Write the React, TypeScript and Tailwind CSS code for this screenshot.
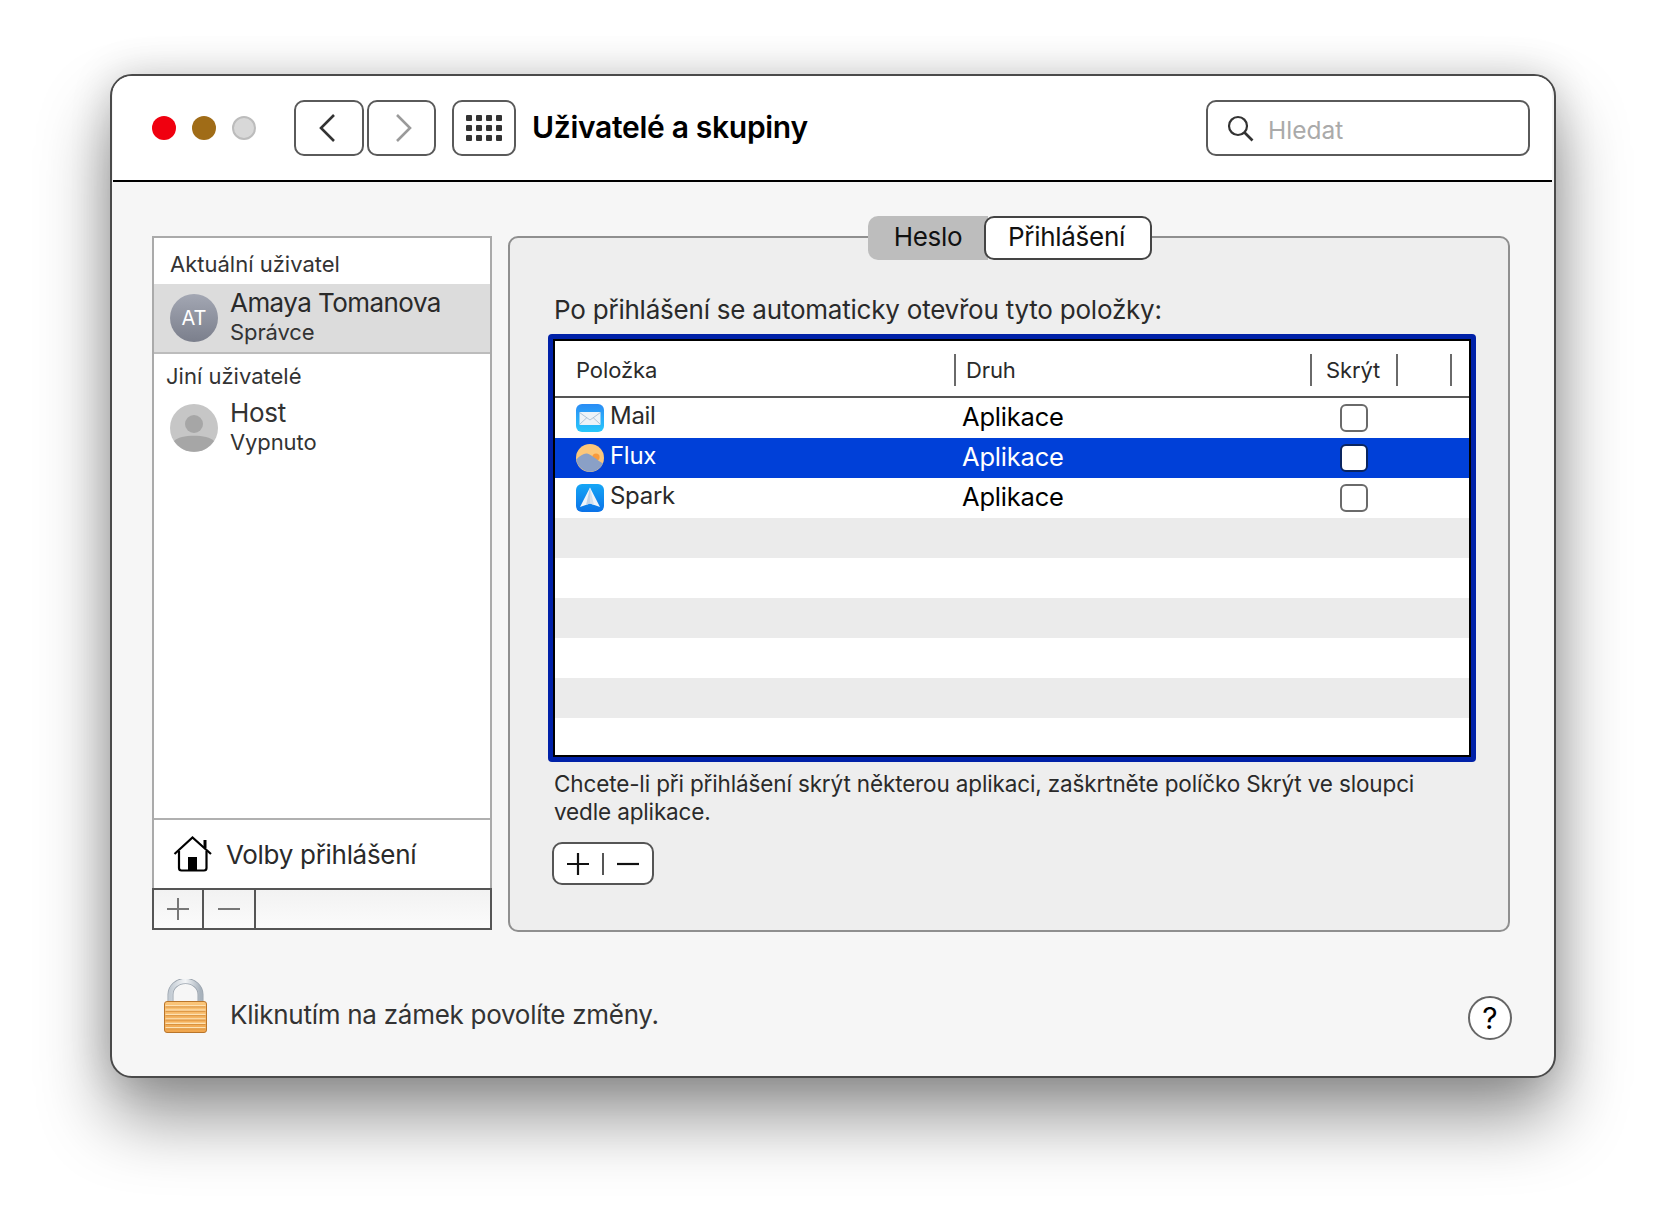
import React from "react";

const font = "font-['Inter','Liberation_Sans',sans-serif]";

function Chevron({ dir, color }: { dir: "l" | "r"; color: string }) {
  return (
    <svg width="20" height="30" viewBox="0 0 20 30" fill="none">
      <path d={dir === "l" ? "M16 2 L3 15 L16 28" : "M4 2 L17 15 L4 28"} stroke={color} strokeWidth="2.6" />
    </svg>
  );
}

function MailIcon() {
  return (
    <svg width="28" height="28" viewBox="0 0 28 28">
      <defs>
        <linearGradient id="m" x1="0" y1="0" x2="0" y2="1">
          <stop offset="0" stopColor="#2a8cf5" />
          <stop offset="1" stopColor="#28c8fb" />
        </linearGradient>
      </defs>
      <rect width="28" height="28" rx="6" fill="url(#m)" />
      <rect x="3.5" y="8" width="21" height="13" rx="1" fill="#eef3f8" />
      <path d="M3.5 8.5 L14 16 L24.5 8.5 M3.5 20.5 L11 13.5 M24.5 20.5 L17 13.5" stroke="#a9bed2" strokeWidth="0.9" fill="none" />
    </svg>
  );
}

function FluxIcon() {
  return (
    <svg width="28" height="28" viewBox="0 0 28 28">
      <circle cx="14" cy="14" r="14" fill="#fcc77a" />
      <circle cx="20" cy="13" r="3.6" fill="#f89a3c" />
      <path d="M0.3 15.5 C4 11.5 8 9 11 9.5 C15 10 22 17 27 19.5 A14 14 0 0 1 0.3 15.5 Z" fill="#8aa0c6" />
    </svg>
  );
}

function SparkIcon() {
  return (
    <svg width="28" height="28" viewBox="0 0 28 28">
      <defs>
        <linearGradient id="s" x1="0" y1="0" x2="0" y2="1">
          <stop offset="0" stopColor="#15a6f6" />
          <stop offset="1" stopColor="#0b72e8" />
        </linearGradient>
      </defs>
      <rect width="28" height="28" rx="6" fill="url(#s)" />
      <path d="M14 3.6 L24 23 L14 19.5 L4 23 Z" fill="#f0f4fa" />
      <path d="M14 3.6 L14 19.5 L10 21 Z" fill="#c4d3e6" />
      <path d="M14 3.6 L14 19.5 L18 21 Z" fill="#d4e0ee" />
    </svg>
  );
}

function House() {
  return (
    <svg width="40" height="36" viewBox="0 0 40 36" fill="none">
      <path d="M1.5 18 L19.5 1.5 L38 18" stroke="#000" strokeWidth="2.2" />
      <path d="M32 4 V12" stroke="#000" strokeWidth="3" />
      <path d="M6 15 V32 Q6 34.5 8.5 34.5 H31 Q33.5 34.5 33.5 32 V15" stroke="#000" strokeWidth="2.2" />
      <rect x="15" y="21" width="9" height="13" fill="#000" />
    </svg>
  );
}

function Lock() {
  const stripes = [0, 1, 2, 3, 4, 5];
  return (
    <svg width="43" height="54" viewBox="0 0 43 54">
      <defs>
        <linearGradient id="lk" x1="0" y1="0" x2="0" y2="1">
          <stop offset="0" stopColor="#fbc67a" />
          <stop offset="1" stopColor="#f0a54c" />
        </linearGradient>
        <linearGradient id="sh" x1="0" y1="0" x2="1" y2="0">
          <stop offset="0" stopColor="#c4ccd4" />
          <stop offset="0.5" stopColor="#f3f5f7" />
          <stop offset="1" stopColor="#a8b2bc" />
        </linearGradient>
      </defs>
      <path d="M6.5 23 V15.5 A15 13.5 0 0 1 36.5 15.5 V23" stroke="#9aa3ad" strokeWidth="6" fill="none" />
      <path d="M6.5 23 V15.5 A15 13.5 0 0 1 36.5 15.5 V23" stroke="url(#sh)" strokeWidth="4.4" fill="none" />
      <rect x="0.5" y="22.5" width="42" height="31" rx="2.5" fill="url(#lk)" stroke="#b9752a" />
      {stripes.map((i) => (
        <g key={i}>
          <rect x="1.5" y={26 + i * 4.4} width="40" height="1.4" fill="#fde2b4" />
          <rect x="1.5" y={27.4 + i * 4.4} width="40" height="1" fill="#d9923f" />
        </g>
      ))}
    </svg>
  );
}

function Checkbox({ selected }: { selected?: boolean }) {
  return (
    <div
      className={
        "w-[28px] h-[28px] rounded-[6px] border-2 bg-white " +
        (selected ? "border-[#0a2560]" : "border-[#6a6a6a]")
      }
    />
  );
}

function Row({ icon, name, selected }: { icon: React.ReactNode; name: string; selected?: boolean }) {
  return (
    <div className={"flex items-center h-[40px] " + (selected ? "bg-[#0040d8] text-white" : "bg-white")}>
      <div className="w-[407px] pl-[21px] flex items-center gap-[6px]">
        {icon}
        <span className={"text-[24px] tracking-[-0.3px] -mt-[4px] " + (selected ? "text-white" : "text-[#2a2a2a]")}>{name}</span>
      </div>
      <div className={"w-[378px] -mt-[2px] text-[25.5px] tracking-[-0.2px] " + (selected ? "text-white" : "text-black")}>Aplikace</div>
      <Checkbox selected={selected} />
    </div>
  );
}

function Sep() {
  return <div className="w-[2px] h-[32px] mt-[2px] bg-[#6a6a6a]" />;
}

export default function App() {
  return (
    <div className={"w-[1666px] h-[1224px] bg-white pl-[110px] pt-[74px] overflow-hidden " + font}>
      <div className="w-[1446px] h-[1004px] rounded-[22px] border-2 border-[#4a4a4a] bg-[#f6f6f6] overflow-hidden flex flex-col shadow-[0_40px_70px_rgba(0,0,0,0.42),0_0_40px_rgba(0,0,0,0.16)]">
        {/* title bar */}
        <div className="h-[106px] shrink-0 bg-white flex items-center pl-[39px] pr-[22px] border-b-2 border-black ml-[1px] mr-[2px]">
          <div className="flex items-center gap-[16px]">
            <div className="w-[24px] h-[24px] rounded-full bg-[#f0000f]" />
            <div className="w-[24px] h-[24px] rounded-full bg-[#a06c17]" />
            <div className="w-[24px] h-[24px] rounded-full bg-[#d8d8d8] border-2 border-[#bcbcbc]" />
          </div>
          <div className="flex items-center gap-[3px] ml-[38px]">
            <div className="w-[70px] h-[56px] rounded-[10px] border-2 border-[#5a5a5a] flex items-center justify-center pr-[2px]">
              <Chevron dir="l" color="#333" />
            </div>
            <div className="w-[69px] h-[56px] rounded-[10px] border-2 border-[#5a5a5a] flex items-center justify-center pl-[2px]">
              <Chevron dir="r" color="#9a9a9a" />
            </div>
          </div>
          <div className="ml-[16px] w-[64px] h-[56px] rounded-[10px] border-2 border-[#5a5a5a] grid grid-cols-[repeat(4,6px)] gap-[4px] content-center justify-center">
            {Array.from({ length: 12 }).map((_, i) => (
              <div key={i} className="w-[6px] h-[6px] rounded-[1px] bg-[#333]" />
            ))}
          </div>
          <div className="ml-[16px] -mt-[1px] text-[30px] font-semibold tracking-[-0.3px] text-black">Uživatelé a skupiny</div>
          <div className="ml-auto w-[324px] h-[56px] rounded-[10px] border-2 border-[#5a5a5a] flex items-center pl-[19px]">
            <svg width="27" height="27" viewBox="0 0 27 27" fill="none">
              <circle cx="11" cy="11" r="9" stroke="#333" strokeWidth="2.2" />
              <path d="M17.5 17.5 L25.5 25.5" stroke="#333" strokeWidth="2.6" />
            </svg>
            <span className="ml-[14px] mt-[5px] text-[24.5px] text-[#aaaaaa]">Hledat</span>
          </div>
        </div>

        {/* content */}
        <div className="flex pl-[40px] pt-[54px] gap-[16px]">
          {/* sidebar */}
          <div className="w-[340px] h-[694px] flex flex-col">
            <div className="flex-1 flex flex-col bg-white border-2 border-b-0 border-[#aaaaaa]">
              <div className="h-[46px] pl-[16px] pt-[12px] text-[22px] leading-[28px] text-[#333]">Aktuální uživatel</div>
              <div className="h-[70px] bg-[#dcdcdc] border-b-2 border-[#bcbcbc] flex items-center pl-[16px] gap-[12px] shrink-0">
                <div className="w-[48px] h-[48px] rounded-full bg-gradient-to-b from-[#a3a7b3] to-[#7b7f8c] flex items-center justify-center text-white text-[20px]">AT</div>
                <div className="flex flex-col -mt-[4px]">
                  <span className="text-[26px] leading-[32px] text-[#2a2a2a] tracking-[-0.55px]">Amaya Tomanova</span>
                  <span className="text-[22px] leading-[26px] text-[#333] tracking-[-0.1px]">Správce</span>
                </div>
              </div>
              <div className="h-[42px] pl-[12px] pt-[8px] text-[22px] leading-[28px] text-[#333]">Jiní uživatelé</div>
              <div className="h-[64px] flex items-center pl-[16px] gap-[12px] shrink-0">
                <svg width="48" height="48" viewBox="0 0 48 48">
                  <circle cx="24" cy="24" r="24" fill="#c6c6c6" />
                  <circle cx="24" cy="20" r="9" fill="#a6a6a6" />
                  <path d="M4 37 C10 30 38 30 44 37 A24 24 0 0 1 4 37 Z" fill="#a6a6a6" />
                </svg>
                <div className="flex flex-col -mt-[4px]">
                  <span className="text-[26px] leading-[32px] text-[#333] tracking-[-0.3px]">Host</span>
                  <span className="text-[22px] leading-[26px] text-[#333] tracking-[-0.1px]">Vypnuto</span>
                </div>
              </div>
              <div className="flex-1" />
              <div className="h-[70px] border-t-2 border-[#b0b0b0] flex items-center pl-[19px] gap-[13px]">
                <House />
                <span className="text-[26px] text-[#2a2a2a] tracking-[-0.3px]">Volby přihlášení</span>
              </div>
            </div>
            <div className="h-[42px] shrink-0 border-2 border-[#555] bg-gradient-to-b from-[#f2f2f2] to-[#fbfbfb] flex">
              <div className="w-[50px] border-r-2 border-[#555] flex items-center justify-center pr-[1px]">
                <svg width="22" height="22" viewBox="0 0 22 22"><path d="M11 0 V22 M0 11 H22" stroke="#777" strokeWidth="2" /></svg>
              </div>
              <div className="w-[52px] border-r-2 border-[#555] flex items-center justify-center">
                <svg width="22" height="22" viewBox="0 0 22 22"><path d="M0 11 H22" stroke="#777" strokeWidth="2" /></svg>
              </div>
            </div>
          </div>

          {/* main panel */}
          <div className="w-[1002px] h-[696px] rounded-[10px] border-2 border-[#8f8f8f] bg-[#eeeeee] flex flex-col">
            <div className="flex justify-center -mt-[22px] pl-[2px] h-[44px] shrink-0">
              <div className="w-[120px] pb-[3px] bg-[#bdbdbd] rounded-l-[10px] flex items-center justify-center text-[26px] text-[#111] tracking-[-0.3px]">Heslo</div>
              <div className="w-[168px] -ml-[4px] pr-[3px] pb-[3px] bg-white border-2 border-[#444] rounded-[10px] flex items-center justify-center text-[26px] text-[#111] tracking-[-0.3px]">Přihlášení</div>
            </div>
            <div className="ml-[44px] mt-[32px] h-[36px] leading-[36px] text-[26px] text-[#2a2a2a] tracking-[-0.22px]">Po přihlášení se automaticky otevřou tyto položky:</div>
            {/* table */}
            <div className="ml-[38px] mt-[6px] w-[928px] h-[428px] rounded-[4px] bg-[#0021a8] p-[5px]">
              <div className="h-full border-[2px] border-black bg-white overflow-hidden">
                <div className="h-[57px] flex items-center border-b-2 border-[#555] text-[22px] text-[#2a2a2a] tracking-[-0.1px]">
                  <div className="w-[399px] pl-[21px] mt-[4px]">Položka</div>
                  <Sep />
                  <div className="w-[354px] pl-[10px] mt-[4px]">Druh</div>
                  <Sep />
                  <div className="w-[84px] pl-[14px] mt-[4px]">Skrýt</div>
                  <Sep />
                  <div className="w-[52px]" />
                  <Sep />
                </div>
                <Row icon={<MailIcon />} name="Mail" />
                <Row icon={<FluxIcon />} name="Flux" selected />
                <Row icon={<SparkIcon />} name="Spark" />
                <div className="h-[40px] bg-[#ebebeb]" />
                <div className="h-[40px] bg-white" />
                <div className="h-[40px] bg-[#ebebeb]" />
                <div className="h-[40px] bg-white" />
                <div className="h-[40px] bg-[#ebebeb]" />
              </div>
            </div>
            <div className="ml-[44px] mt-[8px] w-[880px] text-[22.5px] leading-[28px] text-[#2a2a2a] tracking-[-0.14px]">
              Chcete-li při přihlášení skrýt některou aplikaci, zaškrtněte políčko Skrýt ve sloupci vedle aplikace.
            </div>
            <div className="ml-[42px] mt-[16px] w-[102px] h-[43px] rounded-[10px] border-2 border-[#555] bg-white flex items-center justify-center gap-[13px]">
              <svg width="22" height="22" viewBox="0 0 22 22"><path d="M11 0 V22 M0 11 H22" stroke="#111" strokeWidth="2.2" /></svg>
              <div className="w-[2px] h-[22px] bg-[#555]" />
              <svg width="22" height="22" viewBox="0 0 22 22"><path d="M0 11 H22" stroke="#111" strokeWidth="2.2" /></svg>
            </div>
          </div>
        </div>

        {/* footer */}
        <div className="flex items-start pl-[52px] pt-[47px]">
          <Lock />
          <span className="ml-[23px] mt-[18px] text-[26px] leading-[36px] text-[#333] tracking-[-0.27px]">Kliknutím na zámek povolíte změny.</span>
          <div className="ml-auto mr-[42px] mt-[17px] w-[44px] h-[44px] rounded-full border-2 border-[#666] bg-white flex items-center justify-center text-[30px] text-black">?</div>
        </div>
      </div>
    </div>
  );
}
